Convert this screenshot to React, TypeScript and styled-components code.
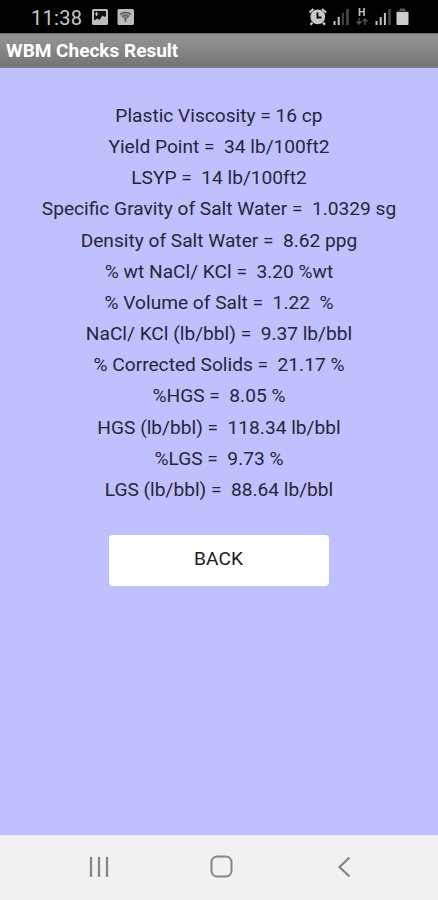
import React from "react";
import styled, { createGlobalStyle } from "styled-components";

const GlobalStyle = createGlobalStyle`
  * { box-sizing: border-box; }
  body { margin: 0; font-family: Roboto, "Liberation Sans", sans-serif; }
`;

const Screen = styled.div`
  width: 438px;
  height: 900px;
  display: flex;
  flex-direction: column;
  overflow: hidden;
  background: #c0c0ff;
`;

const StatusBar = styled.header`
  height: 33px;
  flex: none;
  display: flex;
  align-items: flex-start;
  justify-content: space-between;
  background: #000;
  padding: 0 28px 0 31px;
`;

const StatusGroup = styled.div`
  display: flex;
  align-items: flex-start;
`;

const Clock = styled.span`
  width: 60px;
  padding-top: 7px;
  font-size: 20px;
  line-height: 22px;
  letter-spacing: 0.3px;
  color: #c9c9c9;
`;

const TitleBar = styled.div`
  height: 35px;
  flex: none;
  padding: 0 6px;
  background: linear-gradient(#686868 0, #939393 2px, #8c8c8c 12px, #747474 33px, #85858f 35px);
  color: #fff;
  font-size: 19px;
  font-weight: 700;
  line-height: 35px;
  white-space: nowrap;
`;

const Content = styled.main`
  flex: 1;
  display: flex;
  flex-direction: column;
  align-items: center;
  padding-top: 31.8px;
`;

const Results = styled.div`
  display: flex;
  flex-direction: column;
  align-items: center;
`;

const ResultLine = styled.div`
  height: 31.2px;
  line-height: 31.2px;
  font-size: 19.15px;
  color: #26263a;
  white-space: pre;
`;

const BackButton = styled.button`
  width: 220px;
  height: 51px;
  margin-top: 29.6px;
  padding: 0 1px 4px 0;
  border: 0;
  border-radius: 4px;
  background: #fff;
  color: #202020;
  font-family: inherit;
  font-size: 19.15px;
`;

const NavBar = styled.nav`
  height: 65px;
  flex: none;
  background: #f1f1f1;
  border-top: 1px solid #e9e8f3;
`;

const results = [
  "Plastic Viscosity = 16 cp",
  "Yield Point =  34 lb/100ft2",
  "LSYP =  14 lb/100ft2",
  "Specific Gravity of Salt Water =  1.0329 sg",
  "Density of Salt Water =  8.62 ppg",
  "% wt NaCl/ KCl =  3.20 %wt",
  "% Volume of Salt =  1.22  %",
  "NaCl/ KCl (lb/bbl) =  9.37 lb/bbl",
  "% Corrected Solids =  21.17 %",
  "%HGS =  8.05 %",
  "HGS (lb/bbl) =  118.34 lb/bbl",
  "%LGS =  9.73 %",
  "LGS (lb/bbl) =  88.64 lb/bbl",
];

const NoticeIcons = () => (
  <svg width="44" height="33" viewBox="91 0 44 33">
    <rect x="92" y="9" width="16" height="16" rx="1.5" fill="#bcbcbc" />
    <path d="M94 11h12v5l-1.500 1-2-1.500-3 4.500-2-1.500-3.500 2z" fill="#111" />
    <path d="M96.500 12v4M94.500 14h4" stroke="#bcbcbc" strokeWidth="1.200" />
    <rect x="117.500" y="9" width="16.500" height="16" rx="1.500" fill="#bcbcbc" />
    <path d="M119.500 14q6-4.500 12 0l-6 7z" fill="#8c8c8c" />
    <path d="M120 14q5.500-3.500 11 0M122.500 16.500q3-2.200 6 0" fill="none" stroke="#505050" strokeWidth="1" />
    <path d="M125.500 17v5" stroke="#606060" strokeWidth="1.400" />
  </svg>
);

const Signal = ({ x, lit }: { x: number; lit: number }) => (
  <g>
    {[4, 8, 12, 16].map((h, i) => (
      <rect key={h} x={x + i * 4.2} y={25 - h} width={i === 3 ? 2.8 : 2} height={h} fill={i < lit ? "#c4c4c4" : "#444"} />
    ))}
  </g>
);

const HLetter = styled.text`
  font: 700 10.5px Roboto, sans-serif;
  fill: #c4c4c4;
`;

const SystemIcons = () => (
  <svg width="103" height="33" viewBox="307 0 103 33">
    <g stroke="#c8c8c8" fill="none" strokeWidth="2.200">
      <path d="M309.500 12.500l4-3.500M326 12.500l-4-3.500M312.500 22.500l-2 2.300M323 22.500l2 2.300" />
    </g>
    <circle cx="317.800" cy="16.800" r="7.400" fill="#c8c8c8" />
    <path d="M317.500 12.500v5h4" fill="none" stroke="#050505" strokeWidth="1.900" />
    <Signal x={333.5} lit={2} />
    <HLetter x="358" y="16">H</HLetter>
    <g stroke="#505050" fill="none" strokeWidth="1.500">
      <path d="M359 18v6M356.500 21.500l2.500 2.500 2.500-2.500M365 25v-6M362.500 21.500l2.500-2.500 2.500 2.500" />
    </g>
    <Signal x={375.5} lit={3} />
    <path d="M396.500 11.500l3.500-1.500v-1.500h5v1.500l3.500 1.500z" fill="#555" />
    <rect x="396.500" y="12" width="12" height="13" rx="0.800" fill="#ccc" />
  </svg>
);

const NavIcons = () => (
  <svg width="438" height="64" viewBox="0 836 438 64" fill="none" stroke="#858585">
    <path d="M91 857v20M99 857v20M107 857v20" strokeWidth="2.200" />
    <rect x="211.500" y="856.500" width="20" height="20" rx="5.500" strokeWidth="2" />
    <path d="M349.500 857.500l-10 9.500 10 9.500" strokeWidth="2.200" />
  </svg>
);

export default function App() {
  return (
    <Screen>
      <GlobalStyle />
      <StatusBar>
        <StatusGroup>
          <Clock>11:38</Clock>
          <NoticeIcons />
        </StatusGroup>
        <SystemIcons />
      </StatusBar>
      <TitleBar>WBM Checks Result</TitleBar>
      <Content>
        <Results>
          {results.map((line) => (
            <ResultLine key={line}>{line}</ResultLine>
          ))}
        </Results>
        <BackButton>BACK</BackButton>
      </Content>
      <NavBar>
        <NavIcons />
      </NavBar>
    </Screen>
  );
}
